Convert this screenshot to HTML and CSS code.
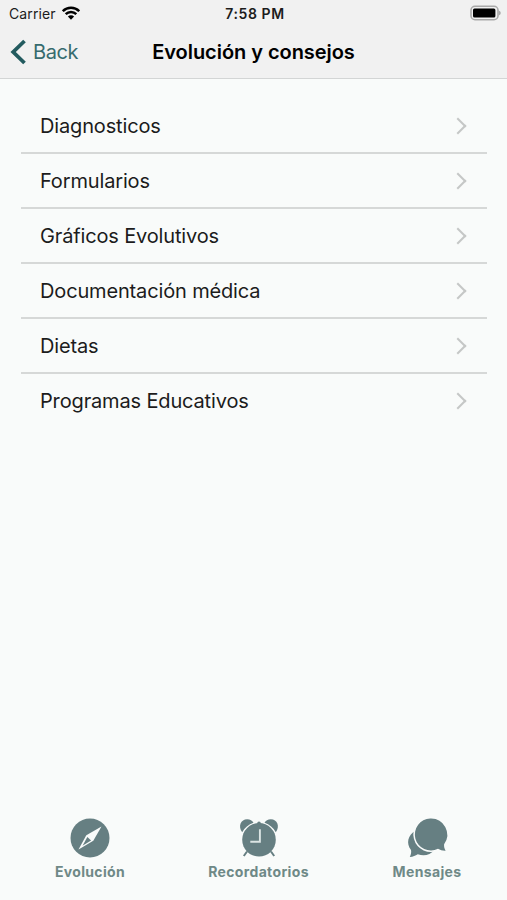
FILE: index.html
```
<!DOCTYPE html>
<html lang="es">
<head>
    <meta charset="UTF-8">
    <meta name="viewport" content="width=device-width, initial-scale=1.0">
    <title>Evolución y consejos</title>
    <link rel="stylesheet" href="styles.css">
</head>
<body>

    <header>
        <div class="status-bar">
            <div class="carrier">
                <span>Carrier</span>
                <svg class="wifi" viewBox="0 0 18 14" width="18" height="14">
                    <path d="M.8 5.2a11.600 11.600 0 0 1 16.400 0M3.700 8.200a7.500 7.500 0 0 1 10.600 0" fill="none" stroke="#000" stroke-width="2.500"/>
                    <path d="M9 13.800L5.900 10.600a4.400 4.400 0 0 1 6.200 0z" fill="#000"/>
                </svg>
            </div>
            <span class="time">7:58 PM</span>
            <svg class="battery" viewBox="0 0 31 16" width="31" height="16">
                <rect x="1" y="1.3" width="27" height="13.4" rx="4" fill="#f1f1f1" stroke="#a9a9a9" stroke-width="1.6"/>
                <rect x="3" y="3.4" width="22.4" height="9.200" rx="1.500" fill="#000"/>
                <path d="M28.600 5.400q2.200 .8 2.200 2.500t-2.200 2.500z" fill="#a9a9a9"/>
            </svg>
        </div>
        <nav class="nav-bar">
            <a class="back">
                <svg viewBox="0 0 16 26" width="16" height="26">
                    <path d="M14.500 2L3.200 13l11.300 11" fill="none" stroke="#235b5f" stroke-width="3.800"/>
                </svg>
                <span>Back</span>
            </a>
            <h1>Evolución y consejos</h1>
        </nav>
    </header>

    <main>
        <ul class="menu">
            <li><span>Diagnosticos</span><i class="chevron"></i></li>
            <li><span>Formularios</span><i class="chevron"></i></li>
            <li><span>Gráficos Evolutivos</span><i class="chevron"></i></li>
            <li><span>Documentación médica</span><i class="chevron"></i></li>
            <li><span>Dietas</span><i class="chevron"></i></li>
            <li><span>Programas Educativos</span><i class="chevron"></i></li>
        </ul>
    </main>

    <footer>
        <!-- Evolución -->
        <a class="tab">
            <svg viewBox="0 0 40 40" width="40" height="40">
                <circle cx="20" cy="20" r="19.5" fill="#667f82"/>
                <path d="M31.500 8.500L23.300 22.700 8.500 31.500 16.300 17.200z" fill="#f9fbfa"/>
                <path d="M17.400 19l3.700 3.600-8.600 5.200z" fill="#667f82"/>
            </svg>
            <span>Evolución</span>
        </a>
        <!-- Recordatorios -->
        <a class="tab">
            <svg viewBox="0 0 40 40" width="40" height="40">
                <g fill="#667f82">
                    <path d="M3.2 14.200C-1.300 8.600 1.800 1.300 8.200 1.300c3 0 5 1.200 6.300 3.500C9.500 6.600 5.700 9.600 3.200 14.200z"/>
                    <path d="M36.800 14.200C41.300 8.600 38.200 1.300 31.800 1.300c-3 0-5 1.200-6.300 3.500 5 1.800 8.800 4.800 11.300 9.400z"/>
                    <circle cx="20" cy="21.800" r="16.800"/>
                    <circle cx="20" cy="5.300" r="1.800"/>
                </g>
                <path d="M8 33.500L4.800 38M32 33.500L35.200 38" fill="none" stroke="#667f82" stroke-width="2"/>
                <path d="M20.900 11.300v12.500H11.300" fill="none" stroke="#dce5e4" stroke-width="1.900"/>
            </svg>
            <span>Recordatorios</span>
        </a>
        <!-- Mensajes -->
        <a class="tab">
            <svg viewBox="0 0 40 40" width="40" height="40">
                <path d="M9 12.500C.5 17 -1 25.500 4 32c.5 2.500-.1 4.500-1.200 7 3.400-.2 5.500-1.200 8-2.700 6 2.200 12.500 1 16.500-4.300z" fill="#667f82"/>
                <path d="M23.200 .5a16 16 0 1 0 7.800 30.300c2.300 1.400 4.500 2 7.600 1.900-1.300-2.300-1.700-4.200-1.500-6.500A16.200 16.200 0 0 0 23.200 .5z" fill="#667f82" stroke="#f9fbfa" stroke-width="3" paint-order="stroke"/>
            </svg>
            <span>Mensajes</span>
        </a>
    </footer>

</body>
</html>
```
FILE: styles.css
```
body {
    font-family: Inter, "Liberation Sans", sans-serif;
    background-color: #f9fbfa;
    color: #1c1c1c;
    margin: 0;
    height: 900px;
    display: flex;
    flex-direction: column;
}

header {
    background-color: #f1f1f1;
    height: 78px;
    border-bottom: 1px solid #d3d5d5;
}

.status-bar {
    display: grid;
    grid-template-columns: 1fr auto 1fr;
    align-items: center;
    height: 27px;
    padding: 0 6px 0 9px;
    font-size: 14px;
}

.carrier {
    display: flex;
    align-items: center;
    gap: 6px;
    letter-spacing: 0.1px;
}

.wifi {
    margin-top: -2px;
}

.time {
    font-size: 14px;
    font-weight: 600;
    letter-spacing: 0.6px;
}

.battery {
    justify-self: end;
    margin-top: -1px;
}

.nav-bar {
    display: grid;
    grid-template-columns: 1fr auto 1fr;
    align-items: center;
    height: 50px;
    padding: 0 10px;
}

.back {
    display: flex;
    align-items: center;
    gap: 7px;
    color: #376b6e;
    font-size: 20px;
    letter-spacing: -0.4px;
}

h1 {
    margin: 0;
    font-size: 20px;
    font-weight: 600;
    letter-spacing: -0.05px;
    color: #000;
}

main {
    flex: 1;
    padding: 20px 20px 0 21px;
}

.menu {
    list-style: none;
    margin: 0;
    padding: 0;
}

.menu li {
    display: flex;
    align-items: center;
    justify-content: space-between;
    box-sizing: border-box;
    height: 55px;
    padding: 0 23px 0 19px;
    border-bottom: 2px solid #d6d8d7;
    font-size: 20px;
    letter-spacing: -0.15px;
}

.menu li:last-child {
    border-bottom-color: transparent;
}

.chevron {
    width: 10px;
    height: 10px;
    border-top: 2px solid #c5c7c6;
    border-right: 2px solid #c5c7c6;
    transform: rotate(45deg);
}

footer {
    display: flex;
    height: 82px;
    padding-left: 5.75px;
}

.tab {
    display: flex;
    flex-direction: column;
    align-items: center;
    flex: 0 0 168.5px;
    gap: 4px;
    color: #6f8987;
    font-size: 14px;
    font-weight: 700;
    line-height: 20px;
    letter-spacing: 0.35px;
}

.tab svg {
    overflow: visible;
}
```
